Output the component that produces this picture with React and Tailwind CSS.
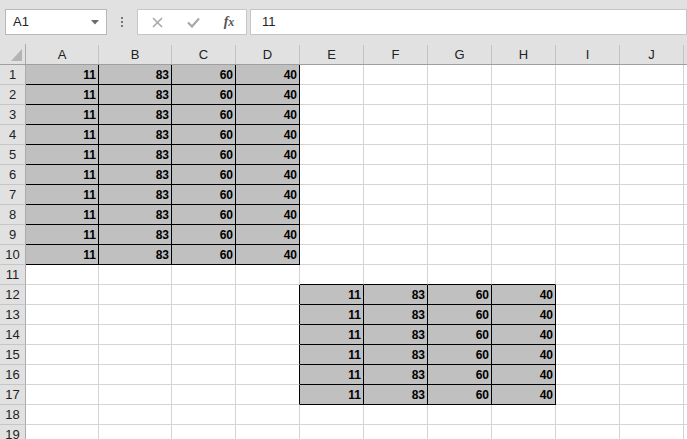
const cols = [
  { name: "A", w: "w-[73px]" },
  { name: "B", w: "w-[73px]" },
  { name: "C", w: "w-[64px]" },
  { name: "D", w: "w-[64px]" },
  { name: "E", w: "w-[64px]" },
  { name: "F", w: "w-[64px]" },
  { name: "G", w: "w-[64px]" },
  { name: "H", w: "w-[64px]" },
  { name: "I", w: "w-[64px]" },
  { name: "J", w: "w-[64px]" },
  { name: "", w: "w-[64px]" }, // K, off screen
];
const rows = Array.from({ length: 19 }, (_, i) => i + 1);
const values = [11, 83, 60, 40];

// which cells hold a value (col index 0 = A)
const cellValue = (r, c) => {
  if (r >= 1 && r <= 10 && c >= 0 && c <= 3) return values[c];
  if (r >= 12 && r <= 17 && c >= 4 && c <= 7) return values[c - 4];
  return null;
};
const filled = (r, c) => cellValue(r, c) !== null;

const Cell = ({ r, c, w }) => {
  const v = cellValue(r, c);
  const right = filled(r, c) || filled(r, c + 1) ? "border-r-black" : "border-r-[#d4d4d4]";
  const bottom = filled(r, c) || filled(r + 1, c) ? "border-b-black" : "border-b-[#d4d4d4]";
  return (
    <div
      className={`${w} h-[20px] shrink-0 border-r border-b ${right} ${bottom} ${
        v !== null ? "bg-[#c0c0c0]" : "bg-white"
      } flex items-end justify-end pr-[2px] pb-[2px] text-[12px] leading-[14px] font-bold text-black`}
    >
      {v}
    </div>
  );
};

const App = () => {
  return (
    <div
      className="w-[687px] h-[439px] overflow-hidden bg-white"
      style={{ fontFamily: '"Liberation Sans", Arial, sans-serif' }}
    >
      {/* Formula bar */}
      <div className="h-[44px] bg-[#e1e1e1] flex items-start pt-[9px]">
        <div className="ml-[5px] w-[102px] h-[26px] bg-white border border-[#b9b9b9] flex items-center justify-between pl-[7px] pr-[7px] text-[13px] text-[#222]">
          <span>A1</span>
          <svg width="8" height="5" viewBox="0 0 8 5">
            <path d="M0 0h8L4 4.5z" fill="#6b6b6b" />
          </svg>
        </div>
        <div className="w-[30px] h-[26px] flex flex-col items-center justify-center gap-[2px]">
          <div className="w-[2px] h-[2px] bg-[#777]" />
          <div className="w-[2px] h-[2px] bg-[#777]" />
          <div className="w-[2px] h-[2px] bg-[#777]" />
        </div>
        <div className="w-[110px] h-[26px] bg-white border border-[#c6c6c6] flex items-center">
          <div className="w-[37px] flex justify-center pl-[2px]">
            <svg width="11" height="11" viewBox="0 0 11 11">
              <path d="M1 1l9 9M10 1l-9 9" stroke="#a8a8a8" strokeWidth="1.6" />
            </svg>
          </div>
          <div className="w-[37px] flex justify-center">
            <svg width="13" height="11" viewBox="0 0 13 11">
              <path d="M1 5.5l4 4L12 1.5" stroke="#a8a8a8" strokeWidth="2.2" fill="none" />
            </svg>
          </div>
          <div
            className="w-[34px] flex justify-center items-baseline italic font-bold text-[14px] text-[#555] leading-none"
            style={{ fontFamily: '"Liberation Serif", "Times New Roman", serif' }}
          >
            <span>f</span>
            <span className="text-[12px]">x</span>
          </div>
        </div>
        <div className="ml-[3px] flex-1 h-[26px] bg-white border border-[#c6c6c6] flex items-center pl-[11px] text-[13px] text-[#222]">
          11
        </div>
      </div>

      {/* Column headers */}
      <div className="flex h-[21px] bg-[#e1e1e1] border-b border-[#9f9f9f]">
        <div className="w-[26px] shrink-0 border-r border-[#ababab] flex items-end justify-end pr-[3px] pb-[3px]">
          <svg width="11" height="12" viewBox="0 0 11 12">
            <path d="M11 0v12H0z" fill="#b4b4b4" />
          </svg>
        </div>
        {cols.map((col, i) => (
          <div
            key={i}
            className={`${col.w} shrink-0 flex items-center justify-center text-[13px] text-[#222] border-r border-[#c4c4c4] mt-[1px]`}
          >
            {col.name}
          </div>
        ))}
      </div>

      {/* Rows */}
      {rows.map((r) => (
        <div key={r} className="flex">
          <div className="w-[26px] h-[20px] shrink-0 bg-[#e1e1e1] border-r border-b border-r-[#ababab] border-b-[#c6c6c6] flex items-center justify-center text-[13px] text-[#222]">
            {r}
          </div>
          {cols.map((col, c) => (
            <Cell key={c} r={r} c={c} w={col.w} />
          ))}
        </div>
      ))}
    </div>
  );
};

export default App
